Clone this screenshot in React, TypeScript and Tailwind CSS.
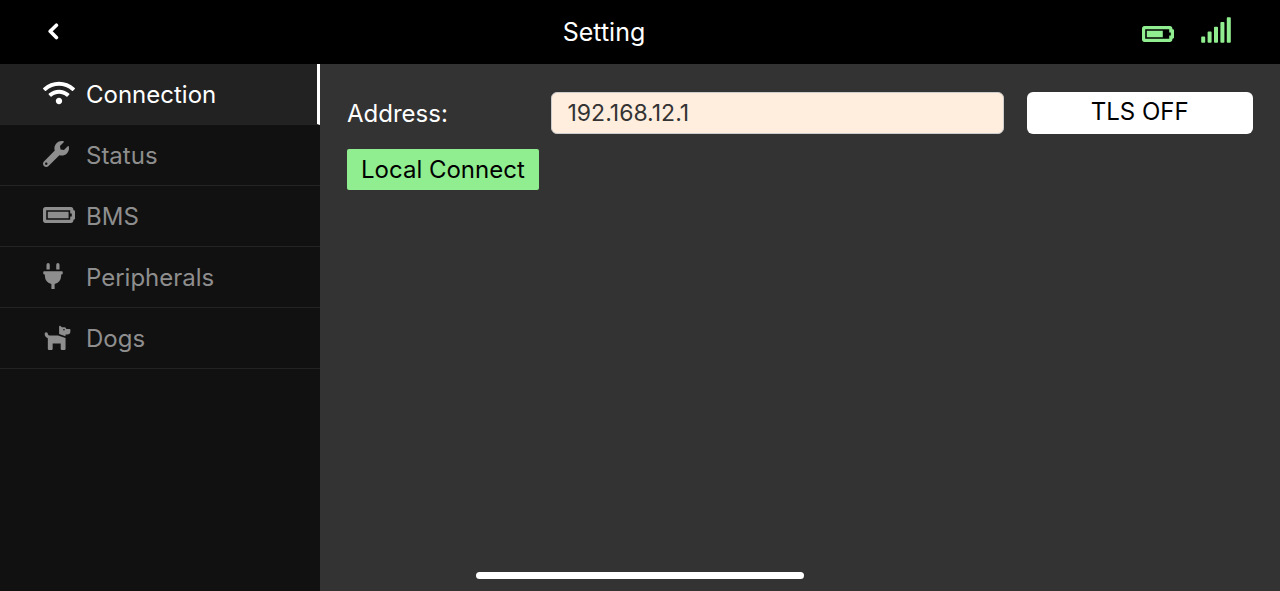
import { useState } from "react";
import type { IconType } from "react-icons";
import {
  FaBatteryFull,
  FaBatteryThreeQuarters,
  FaDog,
  FaPlug,
  FaSignal,
  FaWifi,
  FaWrench,
} from "react-icons/fa";

const sections: { name: string; Icon: IconType; size: string }[] = [
  { name: "Connection", Icon: FaWifi, size: "h-[26px] w-8" },
  { name: "Status", Icon: FaWrench, size: "h-[26px] w-[26px]" },
  { name: "BMS", Icon: FaBatteryFull, size: "h-[26px] w-8" },
  { name: "Peripherals", Icon: FaPlug, size: "h-[26px] w-5" },
  { name: "Dogs", Icon: FaDog, size: "h-[26px] w-[29px]" },
];

function BackIcon() {
  return (
    <svg viewBox="0 0 18 20" className="h-5 w-[18px]" fill="none" aria-hidden="true">
      <path d="M8.4 3.2 2.2 9.3l6.2 6.2" stroke="currentColor" strokeWidth="3.6" strokeLinejoin="round" strokeLinecap="round" />
    </svg>
  );
}

export default function App() {
  const [active, setActive] = useState("Connection");
  const [address, setAddress] = useState("192.168.12.1");
  const [tls, setTls] = useState(false);

  return (
    <div className="flex min-h-screen flex-col bg-[#333333] font-['Inter',sans-serif] text-[24px] leading-8 text-white">
      <header className="flex h-16 items-center justify-between bg-black px-12">
        <button type="button" aria-label="Back" className="flex">
          <BackIcon />
        </button>
        <h1 className="text-[25px]">Setting</h1>
        <div className="flex gap-[26px] text-[#90ee90]">
          <FaBatteryThreeQuarters className="mt-1 h-[26px] w-8" />
          <FaSignal className="mb-1 h-[26px] w-8" />
        </div>
      </header>

      <div className="flex flex-1">
        <nav className="w-1/4 bg-[#111111]">
          {sections.map(({ name, Icon, size }) => (
            <button
              key={name}
              type="button"
              onClick={() => setActive(name)}
              className={`flex h-[61px] w-full items-center border-b border-b-[#242424] pl-[43px] ${
                name === active
                  ? "border-r-[3px] border-r-white bg-[#222222] text-white"
                  : "text-[#8e8e8e]"
              }`}
            >
              <span className="flex w-[43px] pb-[2px]">
                <Icon className={size} />
              </span>
              <span className="pt-[2px]">{name}</span>
            </button>
          ))}
        </nav>

        <main className="flex-1 px-[27px] pt-7">
          <div className="flex items-center">
            <label htmlFor="address" className="flex-1 pt-[2px]">
              Address:
            </label>
            <input
              id="address"
              type="text"
              value={address}
              onChange={(e) => setAddress(e.target.value)}
              className="h-[42px] w-1/2 rounded-md border border-[#cccccc] bg-[#ffeedd] px-4 text-[23px] text-[#333333]"
            />
            <button
              type="button"
              onClick={() => setTls(!tls)}
              className="ml-[23px] h-[42px] w-1/4 rounded-md bg-white pb-[2px] text-black"
            >
              {tls ? "TLS ON" : "TLS OFF"}
            </button>
          </div>
          <button type="button" className="mt-[15px] h-[41px] rounded-xs bg-[#90ee90] px-[14px] text-black">
            Local Connect
          </button>
        </main>
      </div>

      <div className="fixed bottom-3 left-1/2 h-[7px] w-[328px] -translate-x-1/2 rounded-full bg-white" />
    </div>
  );
}
